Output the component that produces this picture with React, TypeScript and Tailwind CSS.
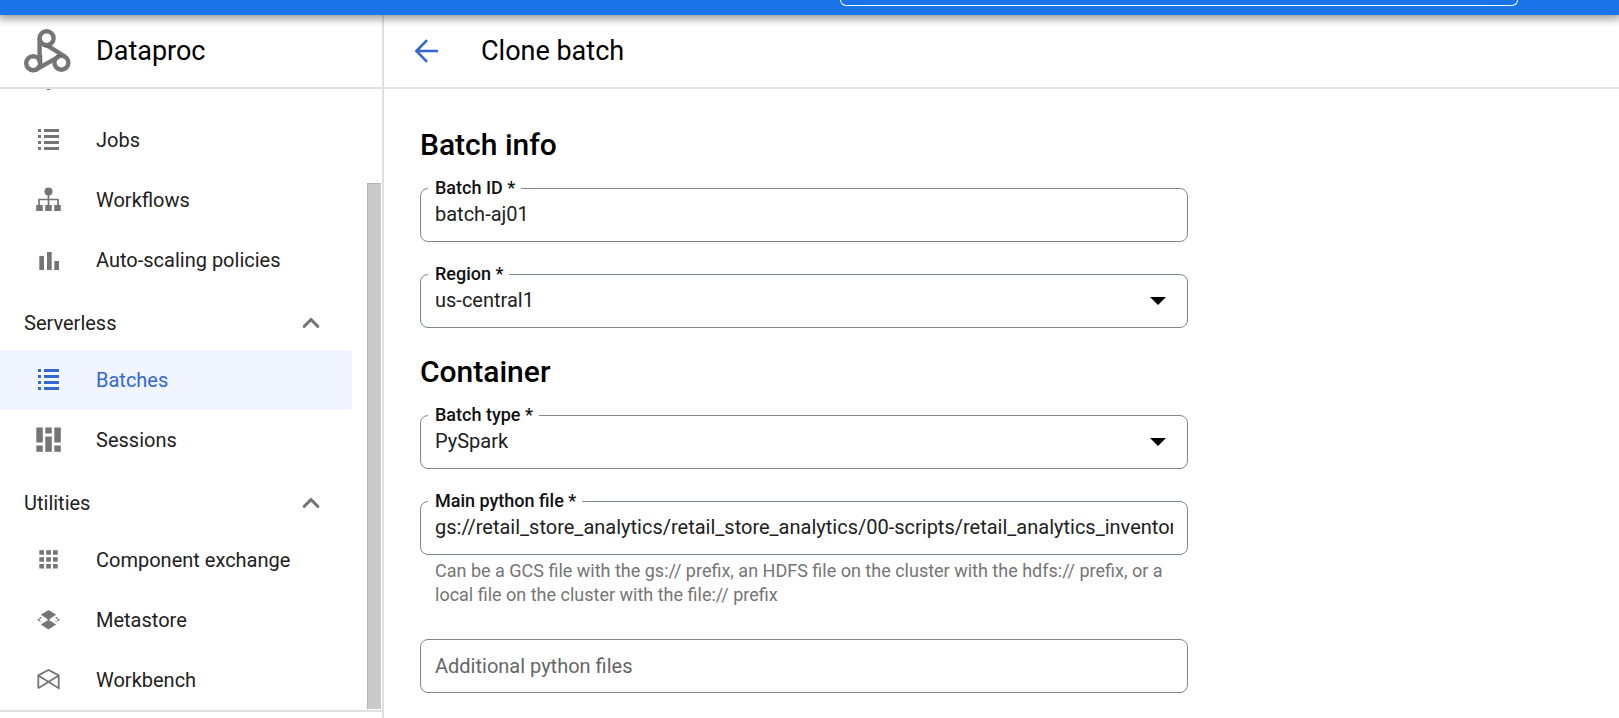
import React from "react";

function ListIcon() {
  return (
    <svg width="28" height="28" viewBox="0 0 28 28" fill="currentColor" aria-hidden="true">
      {[3, 9, 15, 21].map((y) => (
        <React.Fragment key={y}>
          <rect x="4" y={y} width="3" height="3" />
          <rect x="10" y={y} width="15" height="3" />
        </React.Fragment>
      ))}
    </svg>
  );
}

function ClusterIcon() {
  return (
    <svg width="28" height="28" viewBox="0 0 28 28" fill="currentColor" aria-hidden="true">
      <circle cx="14.5" cy="7" r="4" />
      <circle cx="7" cy="16" r="3" />
      <circle cx="22" cy="16" r="3" />
      <circle cx="14.5" cy="20.5" r="3.5" />
    </svg>
  );
}

function WorkflowIcon() {
  return (
    <svg width="28" height="28" viewBox="0 0 28 28" fill="currentColor" aria-hidden="true">
      <circle cx="14.5" cy="5.6" r="4" />
      <path d="M5 19.5V13.5H24V19.5M14.5 8V19.5" fill="none" stroke="currentColor" strokeWidth="1.7" />
      <rect x="2.2" y="19" width="6.6" height="6" />
      <rect x="11.2" y="19" width="6.6" height="6" />
      <rect x="20.2" y="19" width="6.6" height="6" />
    </svg>
  );
}

function BarsIcon() {
  return (
    <svg width="28" height="28" viewBox="0 0 28 28" fill="currentColor" aria-hidden="true">
      <rect x="5.3" y="10" width="4.7" height="14" />
      <rect x="13" y="6" width="4.7" height="18" />
      <rect x="20.3" y="15" width="4.7" height="9" />
    </svg>
  );
}

function SessionsIcon() {
  return (
    <svg width="28" height="28" viewBox="0 0 28 28" fill="currentColor" aria-hidden="true">
      <rect x="2.3" y="1.5" width="6.5" height="15" />
      <rect x="2.3" y="19.5" width="6.5" height="6.3" />
      <rect x="11.3" y="1.5" width="6.5" height="6" />
      <rect x="11.3" y="10.5" width="6.5" height="15.3" />
      <rect x="20.3" y="1.5" width="6.5" height="15" />
      <rect x="20.3" y="19.5" width="6.5" height="6.3" />
    </svg>
  );
}

function GridIcon() {
  return (
    <svg width="28" height="28" viewBox="0 0 28 28" fill="currentColor" aria-hidden="true">
      {[4.2, 11.2, 18].map((y) =>
        [5.3, 12.2, 19].map((x) => <rect key={`${x}-${y}`} x={x} y={y} width="4.7" height="4.5" />),
      )}
    </svg>
  );
}

function MetastoreIcon() {
  return (
    <svg width="28" height="28" viewBox="0 0 28 28" fill="currentColor" aria-hidden="true">
      <path d="M14.5 4 22.2 8.8 17 12H12L6.8 8.8Z" />
      <path d="M14.5 23.6 22.2 18.5 14.5 13.7 6.8 18.5Z" />
      <path d="M12 12H17L14.5 14.4Z" />
      <path d="M7.3 11.2 4.2 13.6 7.3 16M21.7 11.2 24.8 13.6 21.7 16" fill="none" stroke="currentColor" strokeWidth="1.4" strokeDasharray="2.6 1" />
    </svg>
  );
}

function WorkbenchIcon() {
  return (
    <svg width="28" height="28" viewBox="0 0 28 28" fill="none" stroke="currentColor" strokeWidth="1.8" aria-hidden="true">
      <path d="M4.3 22.2V9.4L14.5 4 24.7 9.4V22.2L4.3 9.4M4.3 22.2 24.7 9.4" />
    </svg>
  );
}

function Logo() {
  return (
    <svg width="48" height="44" viewBox="0 0 48 44" fill="none" stroke="#757575" strokeWidth="4.4" aria-hidden="true">
      <circle cx="22.6" cy="9.2" r="7" />
      <circle cx="9.2" cy="34.2" r="7" />
      <circle cx="37.4" cy="33.7" r="7" />
      <path d="M15.6 9V33.5M12 40.6 34.5 27.8M22.6 16.2 41 27.6" />
      <path d="M17.7 26v8M20 17.7h7M32 27.2l6-1" stroke="#5f5f5f" strokeWidth="1" />
    </svg>
  );
}

function NavItem({ icon, label, active = false }: { icon: React.ReactNode; label: string; active?: boolean }) {
  return (
    <a
      href="#"
      aria-current={active ? "page" : undefined}
      className={
        active
          ? "mr-6 flex h-[60px] shrink-0 items-center gap-[34px] bg-[#f0f5ff] pl-[34px] text-[#3367d6]"
          : "mr-6 flex h-[60px] shrink-0 items-center gap-[34px] pl-[34px] text-[#212121]"
      }
    >
      <span className={active ? "text-[#3367d6]" : "text-[#757575]"}>{icon}</span>
      <span>{label}</span>
    </a>
  );
}

function NavSection({ label }: { label: string }) {
  return (
    <button type="button" className="mr-14 flex h-[60px] shrink-0 items-center justify-between pt-1.5 pl-6 text-[#212121]">
      <span>{label}</span>
      <svg width="18" height="18" viewBox="0 0 18 18" fill="none" stroke="#757575" strokeWidth="3" aria-hidden="true">
        <path d="M2.2 12.4 9 5.6 15.8 12.4" strokeLinecap="round" strokeLinejoin="miter" />
      </svg>
    </button>
  );
}

const boxClass = "block h-[54px] w-full appearance-none rounded-lg border border-[#80868b] bg-white px-3.5 pb-0.5 text-[20px] text-[#212121] outline-none";

function FloatingLabel({ htmlFor, children }: { htmlFor: string; children: React.ReactNode }) {
  return (
    <label htmlFor={htmlFor} className="absolute -top-3 left-2 z-10 bg-white pr-1.5 pl-[7px] text-[18px] leading-6 font-medium text-[#111]">
      {children}
    </label>
  );
}

function TextField({ id, label, value }: { id: string; label: string; value: string }) {
  return (
    <div className="relative">
      <FloatingLabel htmlFor={id}>{label}</FloatingLabel>
      <input id={id} type="text" defaultValue={value} className={boxClass} />
    </div>
  );
}

function SelectField({ id, label, value }: { id: string; label: string; value: string }) {
  return (
    <div className="relative">
      <FloatingLabel htmlFor={id}>{label}</FloatingLabel>
      <select id={id} defaultValue={value} className={boxClass}>
        <option>{value}</option>
      </select>
      <svg className="pointer-events-none absolute top-[23px] right-[22px]" width="16" height="8" viewBox="0 0 16 8" aria-hidden="true">
        <path d="M0 0H16L8 8Z" fill="#000" />
      </svg>
    </div>
  );
}

export default function App() {
  return (
    <div className="flex h-screen flex-col overflow-hidden bg-white font-['Roboto',sans-serif] text-[20px] leading-6">
      <header className="relative z-20 flex h-[15px] shrink-0 items-start justify-end bg-[#1a73e8] pr-[101px] shadow-[0_2px_8px_2px_rgba(0,0,0,0.4)]">
        <div className="h-1.5 w-[678px] rounded-b-xl border border-t-0 border-white" />
      </header>

      <div className="flex min-h-0 flex-1">
        <aside className="flex w-[384px] shrink-0 flex-col border-r-2 border-[#e0e0e0]">
          <div className="flex h-[74px] shrink-0 items-center gap-6 border-b-2 border-[#e0e0e0] pl-6">
            <Logo />
            <span className="text-[27px] leading-8 text-black">Dataproc</span>
          </div>
          <div className="flex min-h-0 flex-1">
            <nav className="flex min-w-0 flex-1 flex-col justify-end overflow-hidden -mr-[9px]">
              <div className="flex h-[60px] shrink-0 items-center pl-[34px] text-[#757575]">
                <ClusterIcon />
              </div>
              <NavItem icon={<ListIcon />} label="Jobs" />
              <NavItem icon={<WorkflowIcon />} label="Workflows" />
              <NavItem icon={<BarsIcon />} label="Auto-scaling policies" />
              <NavSection label="Serverless" />
              <NavItem icon={<ListIcon />} label="Batches" active />
              <NavItem icon={<SessionsIcon />} label="Sessions" />
              <NavSection label="Utilities" />
              <NavItem icon={<GridIcon />} label="Component exchange" />
              <NavItem icon={<MetastoreIcon />} label="Metastore" />
              <NavItem icon={<WorkbenchIcon />} label="Workbench" />
            </nav>
            <div className="mr-px flex w-3.5 shrink-0 flex-col pt-[94px] pb-px">
              <div className="flex-1 border-t border-l border-[#b4b4b4] bg-[#cacaca]" />
            </div>
          </div>
          <div className="h-2 shrink-0 border-t-2 border-[#e0e0e0]" />
        </aside>

        <main className="flex min-w-0 flex-1 flex-col">
          <div className="flex h-[74px] shrink-0 items-center gap-[41px] border-b-2 border-[#e4e4e4] pl-[30px]">
            <button type="button" aria-label="Back" className="text-[#3367d6]">
              <svg width="26" height="26" viewBox="0 0 26 26" fill="none" stroke="currentColor" strokeWidth="2.6" aria-hidden="true">
                <path d="M24 13H3M13 2.2 2.4 13 13 23.8" />
              </svg>
            </button>
            <h1 className="text-[27px] leading-8 text-black">Clone batch</h1>
          </div>

          <form className="min-h-0 w-full max-w-[804px] flex-1 overflow-hidden pt-9 pl-9">
            <h2 className="mb-[23px] text-[30px] leading-10 font-medium text-black">Batch info</h2>
            <div className="flex flex-col gap-8">
              <TextField id="batch-id" label="Batch ID *" value="batch-aj01" />
              <SelectField id="region" label="Region *" value="us-central1" />
            </div>
            <h2 className="mt-6 mb-[23px] text-[30px] leading-10 font-medium text-black">Container</h2>
            <div className="flex flex-col gap-8">
              <SelectField id="batch-type" label="Batch type *" value="PySpark" />
              <div>
                <TextField
                  id="main-file"
                  label="Main python file *"
                  value="gs://retail_store_analytics/retail_store_analytics/00-scripts/retail_analytics_inventory.py"
                />
                <p className="px-[15px] pt-1 text-[18px] leading-6 text-[#757575]">
                  Can be a GCS file with the gs:// prefix, an HDFS file on the cluster with the hdfs:// prefix, or a local file on the cluster with the file:// prefix
                </p>
              </div>
              <input
                type="text"
                aria-label="Additional python files"
                placeholder="Additional python files"
                className="block h-[54px] w-full shrink-0 rounded-lg border border-[#80868b] bg-white px-3.5 text-[20px] outline-none placeholder:text-[#666]"
              />
            </div>
          </form>
        </main>
      </div>
    </div>
  );
}
